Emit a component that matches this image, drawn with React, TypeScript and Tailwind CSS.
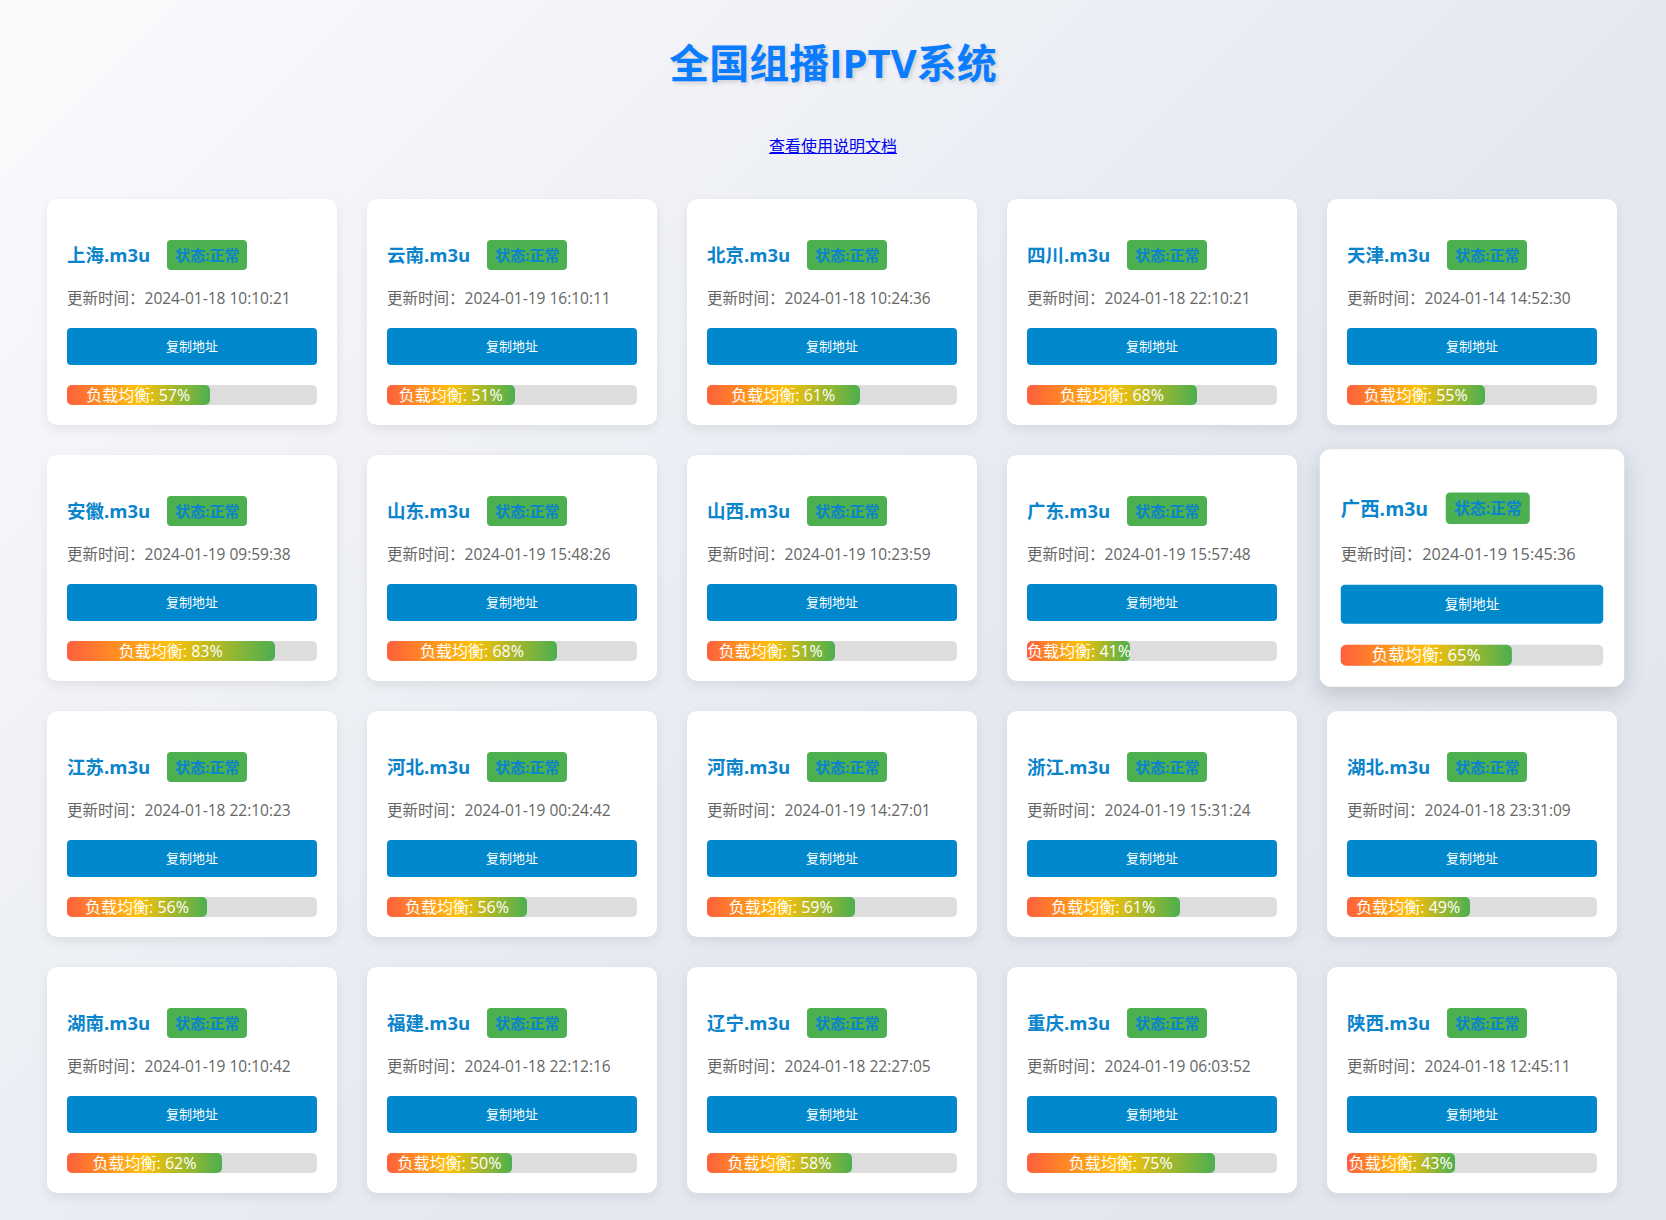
import React from "react";

type Source = {
  name: string;
  time: string;
  load: number;
};

const sources: Source[] = [
  { name: "上海", time: "2024-01-18 10:10:21", load: 57 },
  { name: "云南", time: "2024-01-19 16:10:11", load: 51 },
  { name: "北京", time: "2024-01-18 10:24:36", load: 61 },
  { name: "四川", time: "2024-01-18 22:10:21", load: 68 },
  { name: "天津", time: "2024-01-14 14:52:30", load: 55 },
  { name: "安徽", time: "2024-01-19 09:59:38", load: 83 },
  { name: "山东", time: "2024-01-19 15:48:26", load: 68 },
  { name: "山西", time: "2024-01-19 10:23:59", load: 51 },
  { name: "广东", time: "2024-01-19 15:57:48", load: 41 },
  { name: "广西", time: "2024-01-19 15:45:36", load: 65 },
  { name: "江苏", time: "2024-01-18 22:10:23", load: 56 },
  { name: "河北", time: "2024-01-19 00:24:42", load: 56 },
  { name: "河南", time: "2024-01-19 14:27:01", load: 59 },
  { name: "浙江", time: "2024-01-19 15:31:24", load: 61 },
  { name: "湖北", time: "2024-01-18 23:31:09", load: 49 },
  { name: "湖南", time: "2024-01-19 10:10:42", load: 62 },
  { name: "福建", time: "2024-01-18 22:12:16", load: 50 },
  { name: "辽宁", time: "2024-01-18 22:27:05", load: 58 },
  { name: "重庆", time: "2024-01-19 06:03:52", load: 75 },
  { name: "陕西", time: "2024-01-18 12:45:11", load: 43 },
];

// the 广西 card is shown in its hover state in the screenshot
const HOVERED = "广西";

function SourceCard({ item }: { item: Source }) {
  const hovered = item.name === HOVERED;
  return (
    <div
      className={
        hovered
          ? "bg-white rounded-[10px] p-5 scale-105 shadow-[0_8px_20px_rgba(0,0,0,0.15)]"
          : "bg-white rounded-[10px] p-5 shadow-[0_4px_12px_rgba(0,0,0,0.08)]"
      }
    >
      {/* Title + status */}
      <div className="mt-[21px] flex items-center h-[30px]">
        <h2 className="text-[18.5px] font-bold text-[#0a84cc] leading-none">{item.name}.m3u</h2>
        <span className="ml-[17px] bg-[#4caf50] text-[#0a84cc] font-bold text-[15px] leading-[22px] px-2 py-1 rounded">
          状态:正常
        </span>
      </div>

      {/* Update time */}
      <p className="mt-4 text-[15.5px] leading-6 text-[#666]">更新时间：{item.time}</p>

      {/* Copy button */}
      <button className="mt-[18px] w-full h-[37px] bg-[#0088cc] text-white text-[13px] rounded">
        复制地址
      </button>

      {/* Load bar */}
      <div className="mt-5 h-5 bg-[#ddd] rounded-[5px]">
        <div
          className="h-5 rounded-[5px] bg-[linear-gradient(90deg,#ff5f3d,#ffc107,#4caf50)] text-white text-[16px] leading-5 text-center whitespace-nowrap"
          style={{ width: `${item.load}%` }}
        >
          负载均衡: {item.load}%
        </div>
      </div>
    </div>
  );
}

export default function App() {
  return (
    <div className="min-h-screen bg-[linear-gradient(135deg,#fbfbfd_0%,#e4e8f0_60%,#e2e6ee_100%)] font-['Open_Sans','Noto_Sans_CJK_SC',sans-serif] pt-[39px] pb-6">
      {/* Title */}
      <h1 className="text-center text-[40px] leading-[48px] font-bold text-[#0a7cff] [text-shadow:2px_2px_4px_rgba(0,0,0,0.15)]">
        全国组播IPTV系统
      </h1>

      {/* Docs link */}
      <div className="mt-[47px] text-center leading-6">
        <a href="#" className="text-[#0000ee] underline text-[16px]">
          查看使用说明文档
        </a>
      </div>

      {/* Cards */}
      <div className="mt-[41px] pl-[47px] pr-[49px] grid grid-cols-5 gap-[30px]">
        {sources.map((s) => (
          <SourceCard key={s.name} item={s} />
        ))}
      </div>
    </div>
  );
}
